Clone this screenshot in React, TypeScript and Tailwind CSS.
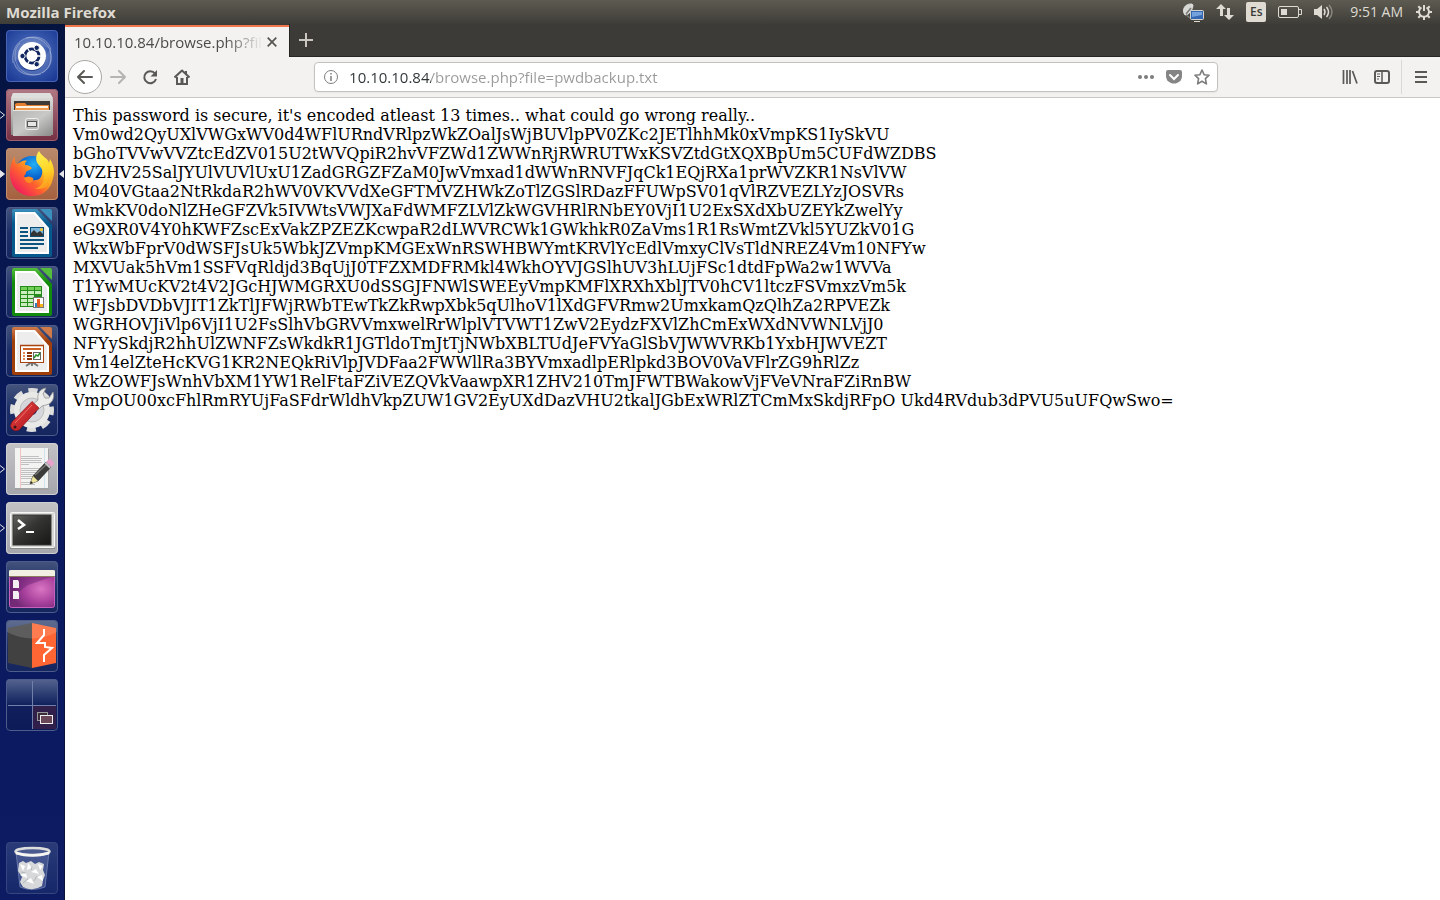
import { useState } from 'react';
import type { ReactNode } from 'react';

const content = [
  "This password is secure, it's encoded atleast 13 times.. what could go wrong really..",
  'Vm0wd2QyUXlVWGxWV0d4WFlURndVRlpzWkZOalJsWjBUVlpPV0ZKc2JETlhhMk0xVmpKS1IySkVU',
  'bGhoTVVwVVZtcEdZV015U2tWVQpiR2hvVFZWd1ZWWnRjRWRUTWxKSVZtdGtXQXBpUm5CUFdWZDBS',
  'bVZHV25SalJYUlVUVlUxU1ZadGRGZFZaM0JwVmxad1dWWnRNVFJqCk1EQjRXa1prWVZKR1NsVlVW',
  'M040VGtaa2NtRkdaR2hWV0VKVVdXeGFTMVZHWkZoTlZGSlRDazFFUWpSV01qVlRZVEZLYzJOSVRs',
  'WmkKV0doNlZHeGFZVk5IVWtsVWJXaFdWMFZLVlZkWGVHRlRNbEY0VjI1U2ExSXdXbUZEYkZwelYy',
  'eG9XR0V4Y0hKWFZscExVakZPZEZKcwpaR2dLWVRCWk1GWkhkR0ZaVms1R1RsWmtZVkl5YUZkV01G',
  'WkxWbFprV0dWSFJsUk5WbkJZVmpKMGExWnRSWHBWYmtKRVlYcEdlVmxyClVsTldNREZ4Vm10NFYw',
  'MXVUak5hVm1SSFVqRldjd3BqUjJ0TFZXMDFRMkl4WkhOYVJGSlhUV3hLUjFSc1dtdFpWa2w1WVVa',
  'T1YwMUcKV2t4V2JGcHJWMGRXU0dSSGJFNWlSWEEyVmpKMFlXRXhXblJTV0hCV1ltczFSVmxzVm5k',
  'WFJsbDVDbVJIT1ZkTlJFWjRWbTEwTkZkRwpXbk5qUlhoV1lXdGFVRmw2UmxkamQzQlhZa2RPVEZk',
  'WGRHOVJiVlp6VjI1U2FsSlhVbGRVVmxwelRrWlplVTVWT1ZwV2EydzFXVlZhCmExWXdNVWNLVjJ0',
  'NFYySkdjR2hhUlZWNFZsWkdkR1JGTldoTmJtTjNWbXBLTUdJeFVYaGlSbVJWWVRKb1YxbHJWVEZT',
  'Vm14elZteHcKVG1KR2NEQkRiVlpJVDFaa2FWWllRa3BYVmxadlpERlpkd3BOV0VaVFlrZG9hRlZz',
  'WkZOWFJsWnhVbXM1YW1RelFtaFZiVEZQVkVaawpXR1ZHV210TmJFWTBWakowVjFVeVNraFZiRnBW',
  'VmpOU00xcFhlRmRYUjFaSFdrWldhVkpZUW1GV2EyUXdDazVHU2tkalJGbExWRlZTCmMxSkdjRFpO',
  'Ukd4RVdub3dPVU5uUFQwSwo=',
].join(' ');

const Tile = ({ children }: { children: ReactNode }) => (
  <svg viewBox="0 0 52 52" className="block size-[52px]" aria-hidden="true">
    {children}
  </svg>
);

const DashIcon = () => (
  <Tile>
    <defs>
      <radialGradient id="dash" cx="50%" cy="45%" r="65%">
        <stop offset="0" stopColor="#7f97d0" />
        <stop offset="0.55" stopColor="#3657ab" />
        <stop offset="1" stopColor="#1d3b96" />
      </radialGradient>
    </defs>
    <rect width="52" height="52" rx="4" fill="url(#dash)" />
    <path d="M28 7C13 7 5 18 7 33l7-6c0-8 5-14 12-14 9 0 15 5 19 7-2-8-8-13-17-13z" fill="#fff" fillOpacity="0.12" />
    <path d="M24 45c15 1 24-10 20-25l-6 7c0 8-5 14-12 14-9 0-15-4-18-9 1 7 6 13 16 13z" fill="#fff" fillOpacity="0.12" />
    <g fill="none" stroke="#fff" strokeOpacity="0.3">
      <path d="M7 33C5 18 13 7 28 7c9 0 15 5 17 13" />
      <path d="M20 8c15-3 27 8 25 23-1 6-5 10-9 12" />
      <path d="M44 20c4 15-5 26-20 25C15 44 9 39 8 32" />
      <path d="M35 44c-15 4-26-6-26-19 0-5 2-9 5-12" />
    </g>
    <circle cx="26" cy="27" r="14" fill="#0d2569" fillOpacity="0.5" />
    <circle cx="26" cy="26" r="14" fill="#fff" />
    <circle cx="26" cy="26" r="7" fill="none" stroke="#12265f" strokeWidth="3" />
    <path d="M26 26l-5-9M26 26l-5 9M26 26h11" stroke="#fff" strokeWidth="1.3" />
    <circle cx="26" cy="26" r="5.4" fill="#fff" />
    <g fill="#12265f" stroke="#fff" strokeWidth="1">
      <circle cx="16.5" cy="26" r="2.7" />
      <circle cx="30.7" cy="17.8" r="2.7" />
      <circle cx="30.7" cy="34.2" r="2.7" />
    </g>
  </Tile>
);

const FilesIcon = () => (
  <Tile>
    <defs>
      <linearGradient id="cabinet" x1="0" y1="0" x2="0" y2="1">
        <stop offset="0" stopColor="#e2e2e0" />
        <stop offset="1" stopColor="#8e8e8c" />
      </linearGradient>
      <linearGradient id="drawer" x1="0" y1="0" x2="1" y2="1">
        <stop offset="0" stopColor="#b5b5b3" />
        <stop offset="0.5" stopColor="#c9c9c7" />
        <stop offset="1" stopColor="#8c8c8a" />
      </linearGradient>
    </defs>
    <path d="M7 4h37l3 6v36H5V10z" fill="url(#cabinet)" />
    <path d="M7 4h37l3 5H5z" fill="#dededc" />
    <path d="M8 12h36v10H8z" fill="#3d3937" />
    <path d="M9 15l2-1h8l2 2h22v6H9z" fill="#e58032" />
    <path d="M10 17h32v2H10z" fill="#fff3e4" />
    <path d="M9 19h34v3H9z" fill="#f19a4c" />
    <path d="M7 21h38v26H7z" fill="url(#drawer)" />
    <path d="M7 21.5h38" stroke="#e7e7e5" />
    <rect x="19.5" y="29.5" width="13" height="11" rx="2" fill="#b8b8b6" stroke="#efefed" />
    <rect x="21.5" y="32.5" width="9" height="5" fill="#e6e6e4" stroke="#565654" />
  </Tile>
);

const FirefoxIcon = () => (
  <Tile>
    <defs>
      <linearGradient id="fox" x1="0.9" y1="0.1" x2="0.15" y2="0.85">
        <stop offset="0" stopColor="#ffe72e" />
        <stop offset="0.35" stopColor="#ffb01e" />
        <stop offset="0.62" stopColor="#ff642d" />
        <stop offset="1" stopColor="#f1205b" />
      </linearGradient>
      <linearGradient id="flame" x1="0" y1="0" x2="0.2" y2="1">
        <stop offset="0" stopColor="#fff255" />
        <stop offset="0.6" stopColor="#ffd528" />
        <stop offset="1" stopColor="#ff9d20" />
      </linearGradient>
      <radialGradient id="globe" cx="55%" cy="25%" r="75%">
        <stop offset="0" stopColor="#23b0f5" />
        <stop offset="0.5" stopColor="#0b66d0" />
        <stop offset="1" stopColor="#1b2a8a" />
      </radialGradient>
    </defs>
    <circle cx="26" cy="25" r="17" fill="url(#globe)" />
    <path
      d="M9 8c-1 3 0 6 1 8l3-1c2-2 5-3 8-2-2 1-2 2-2 4 3 0 5 1 7 3-1 2-4 2-6 4 0 2-1 3-2 4 2 4 7 5 12 4 5 0 7-6 6-12 2 1 3 3 4 5 1-5-1-11-5-15L47 20c2 16-6 28-21 28C13 48 4 38 4 26 4 19 6 12 9 8z"
      fill="url(#fox)"
    />
    <path
      d="M33 3c-3 4-4 9-1 13 4 5 7 9 6 15-1 5-4 8-9 10 12 1 19-7 19-17 0-5-2-10-4-13l-1 4C42 10 36 9 33 3z"
      fill="url(#flame)"
    />
    <path d="M18 30c3-2 6-2 9 0 1 2-1 4-3 5-3 0-5-2-6-5z" fill="#ff8a24" />
  </Tile>
);

interface DocumentPageProps {
  id: string;
  color: string;
  light: string;
  children: ReactNode;
}

const DocumentPage = ({ id, color, light, children }: DocumentPageProps) => (
  <Tile>
    <defs>
      <linearGradient id={id} x1="0" y1="0" x2="0" y2="1">
        <stop offset="0" stopColor={light} />
        <stop offset="0.3" stopColor={color} />
        <stop offset="1" stopColor={color} />
      </linearGradient>
    </defs>
    <path d="M8 2h23l15 16v30q0 2-2 2H8q-2 0-2-2V4q0-2 2-2z" fill={`url(#${id})`} />
    <path d="M34 2h10q2 0 2 2v10z" fill={light} />
    <path d="M9 5h20l14 16v26H9z" fill="#fff" />
    <path d="M11 7h17l13 15v23H11z" fill="#ededed" />
    {children}
  </Tile>
);

const WriterIcon = () => (
  <DocumentPage id="writer" color="#05598c" light="#3a8fbc">
    <path d="M14 21h8M14 25h8M14 29h8M14 33h24M14 37h24M14 41h18" stroke="#0c5380" strokeWidth="2" />
    <rect x="24.5" y="20.5" width="13" height="9" fill="#7fb5d8" stroke="#0c4b74" />
    <path d="M25 29v-3l3-3 3 3 3-2 3 3v2z" fill="#343434" />
    <circle cx="35.5" cy="22.5" r="1.5" fill="#f5c52c" />
  </DocumentPage>
);

const CalcIcon = () => (
  <DocumentPage id="calc" color="#128a0b" light="#54be3c">
    <path d="M14 20h22v21H14z" fill="#258c1b" />
    <g fill="#c9edbd">
      <path d="M15 21h6v3h-6zM22 21h6v3h-6zM29 21h6v3h-6z" fill="#73cf57" />
      <path d="M15 25h6v3h-6zM22 25h6v3h-6zM29 25h6v3h-6zM15 29h6v3h-6zM22 29h6v3h-6zM15 33h6v3h-6zM22 33h6v3h-6zM15 37h6v3h-6zM22 37h6v3h-6z" />
    </g>
    <rect x="27.5" y="31.5" width="10" height="10" fill="#fff" stroke="#777" />
    <path d="M29 37h2v4h-2z" fill="#307fbd" />
    <path d="M31 33h3v8h-3z" fill="#e75b20" />
    <path d="M34 38h3v3h-3z" fill="#f4b619" />
  </DocumentPage>
);

const ImpressIcon = () => (
  <DocumentPage id="impress" color="#a03e0b" light="#d17b4b">
    <path d="M20 41l6-4 6 4M26 37v4" stroke="#777" strokeWidth="2" fill="none" />
    <rect x="14.5" y="20.5" width="23" height="17" fill="#fff" stroke="#aa4310" />
    <path d="M14 20.5h24" stroke="#aa4310" strokeWidth="1.5" />
    <path d="M17 24h18" stroke="#cf6024" strokeWidth="2" />
    <path d="M17 28h2M17 31h2M17 34h2" stroke="#e48a56" strokeWidth="2" />
    <path d="M21 28h5M21 31h5M21 34h5" stroke="#8b3509" strokeWidth="2" />
    <rect x="27.5" y="27.5" width="7" height="7" fill="#fff" stroke="#666" />
    <path d="M28 33l2-3 2 1 2-3" stroke="#26912c" strokeWidth="1.5" fill="none" />
  </DocumentPage>
);

const SettingsIcon = () => (
  <Tile>
    <defs>
      <linearGradient id="handle" x1="0" y1="0" x2="1" y2="1">
        <stop offset="0" stopColor="#ed4b48" />
        <stop offset="1" stopColor="#a80f18" />
      </linearGradient>
    </defs>
    <circle cx="26" cy="26" r="19" fill="none" stroke="#dededc" strokeWidth="6" strokeDasharray="8.9 6" strokeDashoffset="4" />
    <circle cx="26" cy="26" r="13" fill="none" stroke="#e9e9e7" strokeWidth="10" />
    <circle cx="26" cy="26" r="12" fill="#d5d7dc" stroke="#bdbdbd" />
    <circle cx="26" cy="26" r="5.5" fill="#293d75" stroke="#f1f1f1" />
    <path
      d="M26 21l6-5c-1-7 2-11 8-12l-3 6 2 4 4 0 4-6c2 6-1 12-7 13l-4 1-5 5z"
      fill="#ededeb"
      stroke="#969696"
      strokeWidth="0.8"
    />
    <path d="M26 17.500l7 6.500-20 22q-4 2-7-1-3-3 0-7z" fill="url(#handle)" stroke="#8a1015" strokeWidth="0.7" />
    <path d="M26 21L9 39" stroke="#ff8b85" strokeOpacity="0.7" />
    <circle cx="9" cy="43" r="1.5" fill="#3b1515" />
  </Tile>
);

const EditorIcon = () => (
  <Tile>
    <path d="M9 6h34v41H9z" fill="#a2a2a2" />
    <path d="M9 5h33v40H9z" fill="#f3f3f1" />
    <path d="M14.5 5v40" stroke="#f3c4c4" />
    <path d="M38.5 5v40" stroke="#cfe4ee" />
    <path
      d="M15 13.5h18M15 15.5h21M15 17.5h20M15 19.5h21M15 21.5h8M15 25.5h21M15 27.5h19M15 29.5h16M15 31.5h17M15 33.5h12M15 35.5h11M15 39.5h9M15 41.5h14"
      stroke="#c0c0c0"
    />
    <path d="M24 41l3-8 13-14 5 5-13 14z" fill="#3b3b39" stroke="#202020" strokeWidth="0.6" />
    <path d="M29 32l13-12" stroke="#777" strokeWidth="1.4" />
    <path d="M24 41l3-8 5 5z" fill="#efe59a" />
    <path d="M24 41l1-3 2 2z" fill="#222" />
    <path d="M40 19l2-2q3-2 5 1t0 4l-2 2z" fill="#e7a2cb" />
    <path d="M38.5 20.5l5 5 1.5-1.5-5-5z" fill="#c4c4c4" />
  </Tile>
);

const TerminalIcon = () => (
  <Tile>
    <defs>
      <linearGradient id="screen" x1="0" y1="0" x2="1" y2="1">
        <stop offset="0" stopColor="#62625f" />
        <stop offset="0.45" stopColor="#343432" />
        <stop offset="1" stopColor="#161615" />
      </linearGradient>
    </defs>
    <path d="M4 11h45v36H4z" fill="#8a8a88" />
    <rect x="4.5" y="10.5" width="44" height="35" rx="1" fill="#d8d8d6" stroke="#f7f7f5" />
    <rect x="7" y="13" width="38" height="30" fill="url(#screen)" stroke="#343432" />
    <path d="M12 18l6 5-6 4" stroke="#fff" strokeWidth="2.5" fill="none" />
    <path d="M20 30h8" stroke="#fff" strokeWidth="2" />
  </Tile>
);

const DesktopIcon = () => (
  <Tile>
    <defs>
      <radialGradient id="purple" cx="70%" cy="50%" r="65%">
        <stop offset="0" stopColor="#d976c3" />
        <stop offset="0.6" stopColor="#a63f9b" />
        <stop offset="1" stopColor="#742b77" />
      </radialGradient>
    </defs>
    <rect x="3.5" y="9.5" width="45" height="37" rx="2" fill="url(#purple)" stroke="#c85fbe" />
    <path d="M4 15h44L22 24q-10 6-18 18z" fill="#5a1c68" fillOpacity="0.4" />
    <path d="M3 10q0-1 2-1h42q2 0 2 1v5H3z" fill="#f2f0e2" />
    <path d="M3 15.5h46" stroke="#8c7d5e" />
    <path d="M7 19h5l1 2v6H7zM7 30h5l1 2v6H7z" fill="#f2eff2" />
  </Tile>
);

const BurpIcon = () => (
  <Tile>
    <path d="M2 8l24-5v45L2 43z" fill="#414141" />
    <path d="M26 3l24 5v35l-24 5z" fill="#ff6633" />
    <path d="M38 9v6l-7 8h8v4l7 1-8 7v7" fill="none" stroke="#fff" strokeWidth="2" />
    <path d="M1 4q0-3 3-3h44q3 0 3 3v8q-25 13-50 0z" fill="#fff" fillOpacity="0.15" />
  </Tile>
);

const WorkspaceIcon = () => (
  <Tile>
    <path d="M27 27h23v23H27z" fill="#2f1f4a" />
    <path d="M26.5 2v48M2 26.500h48" stroke="#7180ab" />
    <rect x="31.5" y="33.5" width="10" height="8" fill="#3c2b3c" stroke="#999" />
    <rect x="34.5" y="36.5" width="12" height="8" fill="#694758" stroke="#eee" />
  </Tile>
);

const TrashIcon = () => (
  <Tile>
    <path d="M10 10h33l-4 35q-13 5-25 0z" fill="#8e9ed0" fillOpacity="0.3" stroke="#7d8dbc" strokeWidth="0.7" />
    <path d="M13 21l4-2 3 2 5-2 4 3 4-2 5 2-1 6 2 5-2 5-1 6q-9 6-19 1l-3-5 2-5-4-6z" fill="#d6d8d9" />
    <path
      d="M14 22l5 2-2 5zM22 21l4 5-5 2zM32 22l5 2-3 4zM25 30l5-3 3 5zM14 33l6-2 1 5zM31 35l5-2 1 6zM20 39l5-3 3 6z"
      fill="#fff"
    />
    <path d="M15 30l5 1M25 28l1-3M22 37l-5 4M31 34l-3 5" stroke="#b3b7bb" />
    <ellipse cx="26.5" cy="9.500" rx="17" ry="3.500" fill="#4a5a90" stroke="#dcdedb" strokeWidth="2.5" />
    <path d="M10 11q16 5 33 0" stroke="#f5f5f2" strokeWidth="2.5" fill="none" />
  </Tile>
);

const glass = 'bg-linear-to-b from-[#45547c] via-[#1c2d68] to-[#15265f] border-[#4e5c8c]';

const apps = [
  { name: 'Search your computer', icon: <DashIcon />, tile: 'border-[#4765b3] bg-[#1d3b96]' },
  { name: 'Files', icon: <FilesIcon />, tile: 'border-[#a05f6e] bg-linear-to-b from-[#b07a85] to-[#752f43]', running: true },
  { name: 'Firefox Web Browser', icon: <FirefoxIcon />, tile: 'border-[#c18f70] bg-linear-to-b from-[#b98a6d] to-[#a5603e]', running: true, active: true },
  { name: 'LibreOffice Writer', icon: <WriterIcon />, tile: glass },
  { name: 'LibreOffice Calc', icon: <CalcIcon />, tile: glass },
  { name: 'LibreOffice Impress', icon: <ImpressIcon />, tile: glass },
  { name: 'System Settings', icon: <SettingsIcon />, tile: glass },
  { name: 'Text Editor', icon: <EditorIcon />, tile: 'border-[#d0d0d3] bg-linear-to-b from-[#c3c3c6] to-[#a5a6ac]', running: true },
  { name: 'Terminal', icon: <TerminalIcon />, tile: 'border-[#d0d0d3] bg-linear-to-b from-[#c3c3c6] to-[#a5a6ac]', running: true },
  { name: 'Desktop', icon: <DesktopIcon />, tile: glass },
  { name: 'Burp Suite', icon: <BurpIcon />, tile: glass },
  { name: 'Workspace Switcher', icon: <WorkspaceIcon />, tile: 'border-[#4e5c8c] bg-linear-to-b from-[#56648f] via-[#10205d] to-[#0c1b57]' },
];

interface LauncherItemProps {
  name: string;
  icon: ReactNode;
  tile: string;
  running?: boolean;
  active?: boolean;
}

const LauncherItem = ({ name, icon, tile, running, active }: LauncherItemProps) => (
  <li className="flex items-center">
    <span className="w-1.5">
      {running && (
        <svg viewBox="0 0 6 8" className="block h-2 w-1.5" aria-hidden="true">
          <path d="M0 0.5L4.5 4 0 7.5" fill={active ? '#e6e6ea' : 'none'} stroke="#e6e6ea" />
        </svg>
      )}
    </span>
    <button type="button" aria-label={name} className={`relative size-[52px] overflow-hidden rounded-sm ${tile}`}>
      {icon}
      <span className={`absolute inset-0 rounded-sm border ${tile} bg-none bg-transparent`}></span>
    </button>
    <span className="w-1.5">
      {active && (
        <svg viewBox="0 0 6 8" className="block h-2 w-1.5" aria-hidden="true">
          <path d="M6 0L1 4l5 4z" fill="#e6e6ea" />
        </svg>
      )}
    </span>
  </li>
);

const TopPanel = () => (
  <header className="flex h-6 items-center justify-between bg-linear-to-b from-[#5d5b51] to-[#3e3d38] pr-[7px] pl-1.5 text-[#dfdbd2]">
    <h1 className="text-[15px] leading-6 font-bold">Mozilla Firefox</h1>
    <div className="flex items-center gap-3">
      <svg viewBox="0 0 22 20" className="h-5 w-[22px]" aria-hidden="true">
        <path d="M3 13C-1 8 3 1 10 2l1 1c0 5-4 10-8 10z" fill="#d8d8d4" stroke="#eee" strokeWidth="0.7" />
        <path d="M4 12l5-6M4 13l4 3" stroke="#777" strokeWidth="1.5" />
        <rect x="8.5" y="8.5" width="13" height="9" rx="1" fill="#3468b2" stroke="#d6d4cc" />
        <path d="M10 10h10v3l-10 2z" fill="#75a2dc" />
        <path d="M12 19.5h6" stroke="#dfdbd2" />
      </svg>
      <svg viewBox="0 0 18 18" className="size-[18px]" fill="#dfdbd2" aria-hidden="true">
        <path d="M5 1l5 5H7v7H4V6H0zM11 5h3v7h4l-5 5-5-5h3z" />
      </svg>
      <span className="flex size-5 items-center justify-center rounded-xs bg-[#dfdbd2] text-xs font-semibold text-[#3c3b37]">Es</span>
      <svg viewBox="0 0 24 14" className="h-3.5 w-6" aria-hidden="true">
        <rect x="0.5" y="1.5" width="20" height="11" rx="1.5" fill="none" stroke="#dfdbd2" />
        <path d="M3 4h6v6H3z" fill="#dfdbd2" />
        <path d="M21 4.5h2.5v5H21" fill="none" stroke="#dfdbd2" />
      </svg>
      <svg viewBox="0 0 20 16" className="h-4 w-5" fill="none" stroke="#dfdbd2" strokeWidth="1.5" aria-hidden="true">
        <path d="M0 5h3l5-4v14l-5-4H0z" fill="#dfdbd2" stroke="none" />
        <path d="M10 5q2 3 0 6M12.5 3q4 5 0 10" />
        <path d="M15 1q6 7 0 14" strokeOpacity="0.4" />
      </svg>
      <time className="pl-1 text-sm">9:51 AM</time>
      <svg viewBox="0 0 18 18" className="size-[18px]" fill="none" stroke="#dfdbd2" strokeWidth="2" aria-hidden="true">
        <path d="M6.5 4.500a5 5 0 1 0 5 0" />
        <path d="M9 2v6" />
        <path d="M1 9h3M14 9h3M9 14v3M3.300 3.300l2 2M14.700 3.300l-2 2M3.300 14.700l2-2M14.700 14.700l-2-2" />
      </svg>
    </div>
  </header>
);

const Launcher = () => (
  <nav className="flex w-[65px] shrink-0 flex-col justify-between border-r border-[#0a1238] bg-linear-to-b from-[#05133f] via-[#0b1a5e] via-50% to-[#0c1b62] py-1.5">
    <ul className="flex flex-col gap-[7px]">
      {apps.map((app) => (
        <LauncherItem key={app.name} {...app} />
      ))}
    </ul>
    <ul>
      <LauncherItem name="Trash" icon={<TrashIcon />} tile="border-[#35457f] bg-linear-to-b from-[#2a3b78] to-[#16276a]" />
    </ul>
  </nav>
);

interface ToolButtonProps {
  label: string;
  children: ReactNode;
  className?: string;
}

const ToolButton = ({ label, children, className = '' }: ToolButtonProps) => (
  <button type="button" aria-label={label} className={`flex h-8 w-8 shrink-0 items-center justify-center text-[#5a5955] ${className}`}>
    <svg viewBox="0 0 16 16" className="size-4" fill="none" stroke="currentColor" strokeWidth="2" aria-hidden="true">
      {children}
    </svg>
  </button>
);

const UrlBar = () => {
  const [url, setUrl] = useState('10.10.10.84/browse.php?file=pwdbackup.txt');

  return (
    <div className="flex h-[30px] grow-100 basis-0 items-center rounded-sm border border-[#c4c2be] bg-white pr-px pl-2 shadow-xs">
      <svg viewBox="0 0 16 16" className="size-4 shrink-0" fill="none" stroke="#7d7d7d" aria-hidden="true">
        <circle cx="8" cy="8" r="6.5" />
        <path d="M8 7v5M8 4v1.5" strokeWidth="1.5" />
      </svg>
      {/* host part stays dark, the rest of the address is dimmed */}
      <input
        type="text"
        aria-label="Address"
        value={url}
        onChange={(e) => setUrl(e.target.value)}
        className="ml-2.5 min-w-0 grow bg-linear-to-r from-[#2e3436] from-[82px] to-[#999] to-[82px] bg-clip-text text-[15px] leading-6 text-transparent outline-none"
      />
      <div className="flex">
        <button type="button" aria-label="Page actions" className="flex size-7 items-center justify-center">
          <svg viewBox="0 0 16 16" className="size-4" fill="#7c7c7c" aria-hidden="true">
            <circle cx="2" cy="8" r="2" />
            <circle cx="8" cy="8" r="2" />
            <circle cx="14" cy="8" r="2" />
          </svg>
        </button>
        <button type="button" aria-label="Save to Pocket" className="flex size-7 items-center justify-center">
          <svg viewBox="0 0 16 16" className="size-4" aria-hidden="true">
            <path d="M2 1h12q2 0 2 2v4q0 5-5 7-3 1-6 0-5-2-5-7V3q0-2 2-2z" fill="#858585" />
            <path d="M4 6l4 4 4-4" stroke="#fff" strokeWidth="2" fill="none" strokeLinecap="round" />
          </svg>
        </button>
        <button type="button" aria-label="Bookmark this page" className="flex size-7 items-center justify-center">
          <svg viewBox="0 0 16 16" className="size-4" fill="none" stroke="#7c7c7c" strokeWidth="1.6" strokeLinejoin="round" aria-hidden="true">
            <path d="M8 1l2.1 4.700 5 .5-3.700 3.500 1 5.200L8 12.300 3.600 14.900l1-5.200L.9 6.200l5-.5z" />
          </svg>
        </button>
      </div>
    </div>
  );
};

const TabStrip = () => (
  <div className="flex h-[33px] bg-[#3c3b37]">
    <div className="mt-px flex w-56 shrink-0 items-center border-t-2 border-[#f0774a] bg-[#f3f2f1] pr-2 pl-[9px]">
      <button
        type="button"
        className="min-w-0 grow overflow-hidden mask-r-from-80% mask-r-to-100% text-left text-[15px] leading-6 whitespace-nowrap text-[#4b4b48]"
      >
        10.10.10.84/browse.php?file=pwdbackup.txt
      </button>
      <button type="button" aria-label="Close tab" className="flex size-[18px] shrink-0 items-center justify-center">
        <svg viewBox="0 0 10 10" className="size-2.5" stroke="#55544f" strokeWidth="1.7" aria-hidden="true">
          <path d="M0.7 0.7l8.600 8.600M9.300 0.7L0.7 9.300" />
        </svg>
      </button>
    </div>
    <div className="flex grow border-b border-l border-[#252521]">
      <button type="button" aria-label="Open a new tab" className="flex w-8 items-center justify-center">
        <svg viewBox="0 0 14 14" className="size-3.5" stroke="#c9c7c0" strokeWidth="2" aria-hidden="true">
          <path d="M7 0v14M0 7h14" />
        </svg>
      </button>
    </div>
  </div>
);

const Toolbar = () => (
  <div className="flex h-[41px] items-center border-b border-[#c9c7c4] bg-[#f3f2f1] px-[3px]">
    <button
      type="button"
      aria-label="Back"
      className="flex size-[34px] shrink-0 items-center justify-center rounded-full border border-[#a9a8a5] bg-white text-[#5a5955]"
    >
      <svg viewBox="0 0 16 16" className="size-4" fill="none" stroke="currentColor" strokeWidth="2" strokeLinecap="round" strokeLinejoin="round" aria-hidden="true">
        <path d="M15 8H1.500M7 2L1 8l6 6" />
      </svg>
    </button>
    <ToolButton label="Forward" className="opacity-40">
      <path d="M1 8h14M9 2l6 6-6 6" strokeLinecap="round" strokeLinejoin="round" />
    </ToolButton>
    <ToolButton label="Reload">
      <path d="M13 4.500A6 6 0 1 0 14 10" />
      <path d="M15 1v6.500H8.500z" fill="currentColor" stroke="none" />
    </ToolButton>
    <ToolButton label="Home">
      <path d="M0.5 8.500L8 1.500l7.500 7" strokeLinejoin="round" />
      <path d="M3 8v7h10V8" />
      <path d="M12 2v3" />
      <path d="M8 9v5" strokeWidth="3" />
    </ToolButton>
    <div className="grow-13 basis-0"></div>
    <UrlBar />
    <div className="grow-13 basis-0"></div>
    <ToolButton label="Library">
      <path d="M1.500 1v14M5 1v14M8 1v14M10.500 2l4.500 12.500" strokeWidth="1.7" />
    </ToolButton>
    <ToolButton label="Sidebars">
      <rect x="1" y="2" width="14" height="12" rx="2" />
      <path d="M8 2v12" strokeWidth="1.5" />
      <path d="M3 5h3M3 7.500h3M3 10h2" strokeWidth="1" />
    </ToolButton>
    <div className="ml-[3px] h-[34px] w-px bg-[#dad8d5]"></div>
    <ToolButton label="Open menu" className="ml-[3px]">
      <path d="M2 3h12M2 8h12M2 13h12" />
    </ToolButton>
  </div>
);

const App = () => {
  return (
    <div className="flex min-h-screen flex-col bg-white font-['Open_Sans',sans-serif]">
      <TopPanel />
      <div className="flex grow">
        <Launcher />
        <div className="flex min-w-0 grow flex-col">
          <TabStrip />
          <Toolbar />
          <main className="grow bg-white p-2 font-['DejaVu_Serif',serif] text-base leading-[19px] text-black">
            <p>{content}</p>
          </main>
        </div>
      </div>
    </div>
  );
};

export default App;
